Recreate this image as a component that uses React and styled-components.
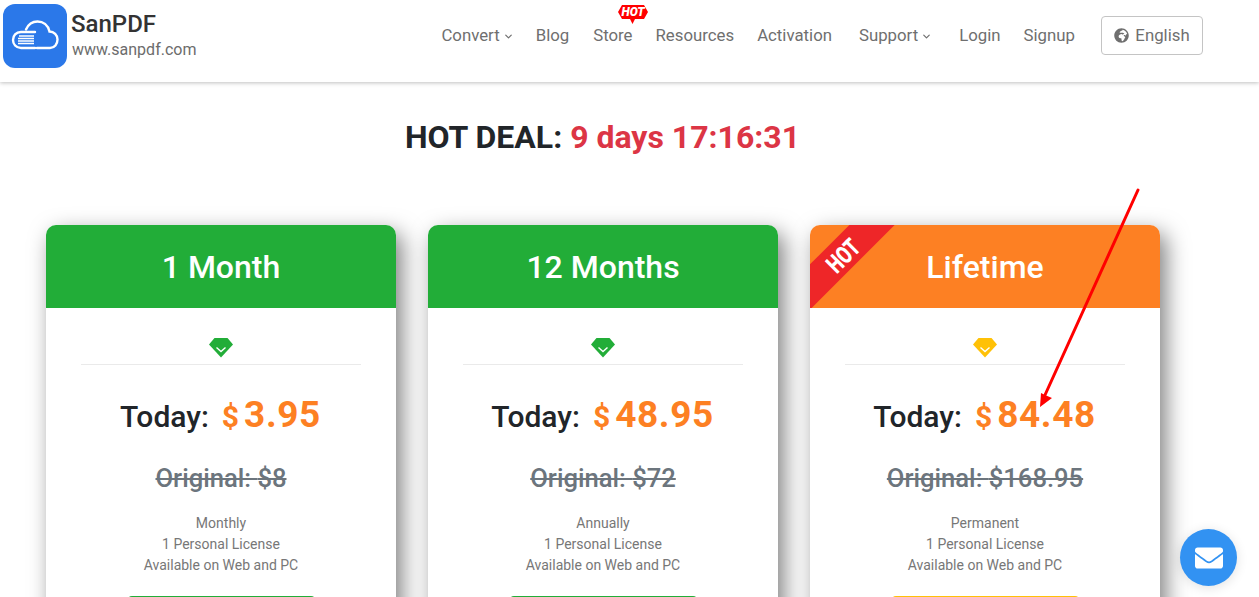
import React from "react"
import styled, { createGlobalStyle } from "styled-components"
import { FaGlobeAfrica, FaEnvelope } from "react-icons/fa"
import { FiChevronDown } from "react-icons/fi"

const GlobalStyle = createGlobalStyle`
  html, body {
    margin: 0;
    padding: 0;
    height: 597px;
    overflow: hidden;
    background: #fff;
    font-family: Roboto, "Liberation Sans", sans-serif;
  }
  * { box-sizing: border-box; }
`

const Header = styled.header`
  height: 82px;
  padding: 4px 56px 0 3px;
  display: flex;
  justify-content: space-between;
  background: #fff;
  box-shadow: 0 1px 4px rgba(0, 0, 0, 0.25);
`

const Brand = styled.div`
  display: flex;
  align-items: flex-start;
  gap: 4px;
`

const LogoBox = styled.div`
  width: 64px;
  height: 64px;
  border-radius: 12px;
  background: #2b78e9;
  display: flex;
  align-items: center;
  justify-content: center;
`

const BrandText = styled.div`
  padding-top: 6px;
`

const BrandName = styled.div`
  font-size: 24px;
  line-height: 28px;
  font-weight: 500;
  color: #333;
`

const BrandUrl = styled.div`
  font-size: 16px;
  line-height: 20px;
  color: #6c6c6c;
  margin: 2px 0 0 1px;
`

const Nav = styled.nav`
  display: flex;
  align-items: center;
  height: 62px;
`

const NavItem = styled.a`
  position: relative;
  display: flex;
  align-items: center;
  font-size: 16.8px;
  color: #6f6f6f;
  margin-left: ${p => p.$gap || 24}px;
`

const Caret = styled(FiChevronDown)`
  width: 11px;
  height: 11px;
  margin: 2px 0 0 3px;
  stroke-width: 2.6;
`

const HotTag = styled.svg`
  position: absolute;
  top: -21px;
  left: 24px;
`

const LangButton = styled.button`
  margin-left: 26px;
  width: 102px;
  height: 39px;
  border: 1px solid #c4c4c4;
  border-radius: 4px;
  background: #fff;
  color: #6f6f6f;
  font: 400 16.8px Roboto, sans-serif;
  display: flex;
  align-items: center;
  justify-content: center;
  gap: 6px;
`

const Countdown = styled.h1`
  margin: 36px 0 0;
  height: 107px;
  padding-right: 54px;
  font-size: 32px;
  line-height: 38px;
  font-weight: 700;
  color: #212529;
  text-align: center;
  span { color: #dc3545; }
`

const Plans = styled.main`
  display: flex;
  gap: 32px;
  padding-left: 46px;
`

const Plan = styled.section`
  width: 350px;
  height: 500px;
  flex: none;
  border-radius: 10px;
  background: #fff;
  box-shadow: 6px 8px 22px rgba(0, 0, 0, 0.5);
`

const PlanHead = styled.div`
  position: relative;
  height: 83px;
  padding-top: 1px;
  overflow: hidden;
  border-radius: 10px 10px 0 0;
  background: ${p => p.$color};
  color: #fff;
  font-size: 32px;
  font-weight: 500;
  display: flex;
  align-items: center;
  justify-content: center;
`

const Ribbon = styled.div`
  position: absolute;
  top: 15px;
  left: -69px;
  width: 200px;
  height: 32px;
  background: #ee2628;
  transform: rotate(-45deg);
  display: flex;
  align-items: center;
  justify-content: center;
`

const RibbonText = styled.span`
  font-size: 25px;
  font-weight: 900;
  transform: translate(2px, 1px) scaleX(0.72);
`

const PlanBody = styled.div`
  padding: 30px 35px 0;
  text-align: center;
`

const GemRow = styled.div`
  height: 27px;
  border-bottom: 1px solid #eaeaea;
  display: flex;
  justify-content: center;
`

const PriceRow = styled.div`
  margin-top: 27px;
  height: 46px;
  display: flex;
  align-items: baseline;
  justify-content: center;
  font-size: 30px;
  line-height: 46px;
  font-weight: 500;
  color: #212529;
`

const Currency = styled.span`
  margin-left: 13px;
  font-size: 30px;
  font-weight: 700;
  color: #fd8023;
`

const Amount = styled.span`
  margin: 0 1px 0 5px;
  font-size: 37px;
  font-weight: 700;
  letter-spacing: 0.6px;
  color: #fd8023;
`

const Original = styled.div`
  margin-top: 23px;
  font-size: 25.6px;
  line-height: 34px;
  font-weight: 500;
  color: #6c757d;
  text-decoration: line-through;
`

const Details = styled.div`
  margin-top: 18px;
  font-size: 14px;
  line-height: 21px;
  color: #777;
`

const BuyButton = styled.div`
  width: 187px;
  height: 40px;
  margin: 20px auto 0;
  border-top: 2px solid ${p => p.$color};
  border-radius: 4px 4px 0 0;
`

const Arrow = styled.svg`
  position: absolute;
  top: 185px;
  left: 1030px;
  pointer-events: none;
`

const MailBubble = styled.div`
  position: fixed;
  left: 1180px;
  top: 529px;
  width: 57px;
  height: 57px;
  border-radius: 50%;
  background: #3292f2;
  color: #fff;
  display: flex;
  align-items: center;
  justify-content: center;
  box-shadow: 0 2px 12px rgba(0, 0, 0, 0.12);
`

const Gem = ({ color }) => (
  <svg width="24" height="20" viewBox="0 0 24 20">
    <path d="M5.5 0H18.5L24 6.5 12 19.5 0 6.5z" fill={color} />
    <path d="M7.5 9.500L12 13.500 16.500 9.500" fill="none" stroke="#fff" strokeWidth="1.4" />
  </svg>
)

const plans = [
  { title: "1 Month", amount: "3.95", original: "$8", period: "Monthly", color: "#22ad38", gem: "#22ad38", buy: "#22ad38" },
  { title: "12 Months", amount: "48.95", original: "$72", period: "Annually", color: "#22ad38", gem: "#22ad38", buy: "#22ad38" },
  { title: "Lifetime", amount: "84.48", original: "$168.95", period: "Permanent", color: "#fd8023", gem: "#ffc107", buy: "#ffc107", hot: true },
]

const App = () => (
  <>
    <GlobalStyle />
    <Header>
      <Brand>
        <LogoBox>
          <svg width="50" height="36" viewBox="0 0 50 36" fill="none" stroke="#fff" strokeWidth="2.4" strokeLinecap="round">
            <path d="M27 30H40C44.500 30 47.500 26 47.500 21.500C47.500 17 44 13.500 39.500 13.500C38 7 33 3.500 27.500 3.500C22 3.500 18 7 16 11.500" />
            <path d="M25 30H11C6 30 3 26 3 22C3 17.500 6 14 11 14H25" />
            <path d="M9 18H24M8 20.500H24M8 23H24M8 25.500H24" strokeWidth="1.300" strokeLinecap="butt" />
          </svg>
        </LogoBox>
        <BrandText>
          <BrandName>SanPDF</BrandName>
          <BrandUrl>www.sanpdf.com</BrandUrl>
        </BrandText>
      </Brand>
      <Nav>
        <NavItem>Convert<Caret /></NavItem>
        <NavItem $gap={22}>Blog</NavItem>
        <NavItem>
          <HotTag width="32" height="21" viewBox="0 0 32 21">
            <path d="M5 1H27L31 8 27 15H18L15.500 20 13 15H5L1 8z" fill="#f00" />
            <text x="16" y="12" textAnchor="middle" fill="#fff" fontSize="12" fontWeight="900" fontStyle="italic" fontFamily="Roboto, sans-serif">HOT</text>
          </HotTag>
          Store
        </NavItem>
        <NavItem $gap={23}>Resources</NavItem>
        <NavItem $gap={23}>Activation</NavItem>
        <NavItem $gap={27}>Support<Caret /></NavItem>
        <NavItem $gap={27}>Login</NavItem>
        <NavItem $gap={23}>Signup</NavItem>
        <LangButton><FaGlobeAfrica size={15} />English</LangButton>
      </Nav>
    </Header>
    <Countdown>HOT DEAL: <span>9 days 17:16:31</span></Countdown>
    <Plans>
      {plans.map(plan => (
        <Plan key={plan.title}>
          <PlanHead $color={plan.color}>
            {plan.hot && <Ribbon><RibbonText>HOT</RibbonText></Ribbon>}
            {plan.title}
          </PlanHead>
          <PlanBody>
            <GemRow><Gem color={plan.gem} /></GemRow>
            <PriceRow>
              Today:<Currency>$</Currency><Amount>{plan.amount}</Amount>
            </PriceRow>
            <Original>Original: {plan.original}</Original>
            <Details>
              {plan.period}<br />1 Personal License<br />Available on Web and PC
            </Details>
            <BuyButton $color={plan.buy} />
          </PlanBody>
        </Plan>
      ))}
    </Plans>
    <Arrow width="120" height="230" viewBox="0 0 120 230">
      <path d="M108 5L15 210" stroke="#f00" strokeWidth="3" fill="none" strokeLinecap="round" />
      <path d="M10 222L11 208 15 210 22 213z" fill="#f00" />
    </Arrow>
    <MailBubble><FaEnvelope size={28} /></MailBubble>
  </>
)

export default App
